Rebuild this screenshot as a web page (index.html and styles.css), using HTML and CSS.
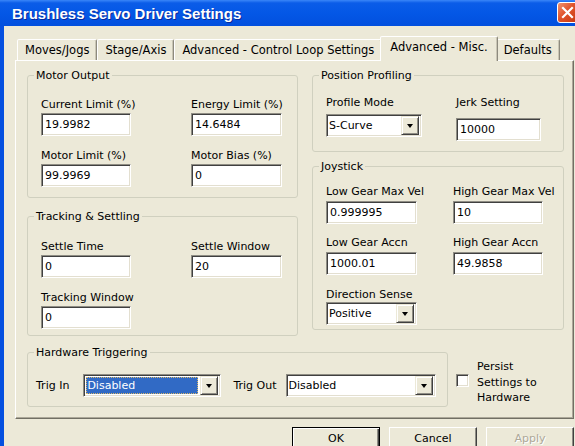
FILE: index.html
```html
<!DOCTYPE html>
<html lang="en">
<head>
<meta charset="utf-8">
<title>Brushless Servo Driver Settings</title>
<link rel="stylesheet" href="styles.css">
</head>
<body>
<div class="window">
  <div class="titlebar">
    <span class="title">Brushless Servo Driver Settings</span>
    <span class="close">
      <svg width="21" height="21" viewBox="0 0 21 21" aria-hidden="true">
        <path d="M6 6 L15 15 M15 6 L6 15" stroke="#fff" stroke-width="2.2" stroke-linecap="square" fill="none"/>
      </svg>
    </span>
  </div>

  <div class="client">
    <div class="tabs">
      <div class="tab">Moves/Jogs</div>
      <div class="tab">Stage/Axis</div>
      <div class="tab">Advanced - Control Loop Settings</div>
      <div class="tab active">Advanced - Misc.</div>
      <div class="tab">Defaults</div>
    </div>

    <div class="panel">
      <div class="columns">
        <div class="col col-left">
          <fieldset class="group motor">
            <legend>Motor Output</legend>
            <div class="fields">
              <div class="field"><span class="lbl">Current Limit (%)</span><input class="edit" type="text" value="19.9982"></div>
              <div class="field"><span class="lbl">Energy Limit (%)</span><input class="edit" type="text" value="14.6484"></div>
              <div class="field"><span class="lbl">Motor Limit (%)</span><input class="edit" type="text" value="99.9969"></div>
              <div class="field"><span class="lbl">Motor Bias (%)</span><input class="edit" type="text" value="0"></div>
            </div>
          </fieldset>

          <fieldset class="group tracking">
            <legend>Tracking &amp; Settling</legend>
            <div class="fields">
              <div class="field"><span class="lbl">Settle Time</span><input class="edit" type="text" value="0"></div>
              <div class="field"><span class="lbl">Settle Window</span><input class="edit" type="text" value="20"></div>
              <div class="field"><span class="lbl">Tracking Window</span><input class="edit" type="text" value="0"></div>
            </div>
          </fieldset>
        </div>

        <div class="col col-right">
          <fieldset class="group profiling">
            <legend>Position Profiling</legend>
            <div class="fields">
              <div class="field">
                <span class="lbl">Profile Mode</span>
                <div class="combo"><span class="combo-text">S-Curve</span><span class="combo-btn"><i class="arrow"></i></span></div>
              </div>
              <div class="field jerk"><span class="lbl">Jerk Setting</span><input class="edit" type="text" value="10000"></div>
            </div>
          </fieldset>

          <fieldset class="group joystick">
            <legend>Joystick</legend>
            <div class="fields">
              <div class="field"><span class="lbl">Low Gear Max Vel</span><input class="edit" type="text" value="0.999995"></div>
              <div class="field"><span class="lbl">High Gear Max Vel</span><input class="edit" type="text" value="10"></div>
              <div class="field"><span class="lbl">Low Gear Accn</span><input class="edit" type="text" value="1000.01"></div>
              <div class="field"><span class="lbl">High Gear Accn</span><input class="edit" type="text" value="49.9858"></div>
              <div class="field direction">
                <span class="lbl">Direction Sense</span>
                <div class="combo"><span class="combo-text">Positive</span><span class="combo-btn"><i class="arrow"></i></span></div>
              </div>
            </div>
          </fieldset>
        </div>
      </div>

      <div class="bottom-row">
        <fieldset class="group triggering">
          <legend>Hardware Triggering</legend>
          <div class="trig-row">
            <span class="trig-lbl trig-in">Trig In</span>
            <div class="combo combo-in"><span class="combo-text"><span class="selected">Disabled</span></span><span class="combo-btn"><i class="arrow"></i></span></div>
            <span class="trig-lbl trig-out">Trig Out</span>
            <div class="combo combo-out"><span class="combo-text">Disabled</span><span class="combo-btn"><i class="arrow"></i></span></div>
          </div>
        </fieldset>

        <div class="persist">
          <span class="check"></span>
          <span class="persist-text">Persist<br>Settings to<br>Hardware</span>
        </div>
      </div>
    </div>

    <div class="buttons">
      <button class="btn default" type="button">OK</button>
      <button class="btn" type="button">Cancel</button>
      <button class="btn" type="button" disabled>Apply</button>
    </div>
  </div>
</div>
</body>
</html>
```
FILE: styles.css
```css
* {
  box-sizing: border-box;
}

html,
body {
  margin: 0;
  padding: 0;
}

body {
  width: 575px;
  height: 446px;
  overflow: hidden;
  background: #ece9d8;
  font-family: "DejaVu Sans", Verdana, sans-serif;
  font-size: 11px;
  color: #000;
}

/* ---------- window chrome ---------- */

.window {
  display: flex;
  flex-direction: column;
  height: 446px;
}

.titlebar {
  position: relative;
  height: 26px;
  flex: none;
  display: flex;
  align-items: center;
  padding-left: 12px;
  background: linear-gradient(to bottom, #3a86f8 0, #0b5ce8 3px, #0457e6 50%, #0250de 100%);
}

.title {
  font-family: "Liberation Sans", Arial, sans-serif;
  font-weight: bold;
  font-size: 15px;
  color: #fff;
  text-shadow: 1px 1px 0 #0a2a9a;
  white-space: nowrap;
}

.close {
  position: absolute;
  left: 557px;
  top: 2px;
  width: 21px;
  height: 21px;
  border: 1px solid #fff;
  border-radius: 3px;
  background: linear-gradient(135deg, #f0936f 0, #e0532b 45%, #c8380f 100%);
}

.close svg {
  display: block;
  margin: -1px;
}

.client {
  flex: 1;
  border-left: 4px solid #0550e0;
  padding: 10px 0 0 11px;
}

/* ---------- tabs ---------- */

.tabs {
  position: relative;
  z-index: 1;
  display: flex;
  align-items: flex-end;
  height: 24px;
  padding-left: 2px;
}

.tab {
  height: 21px;
  padding: 0 7px;
  font-size: 11.5px;
  line-height: 20px;
  white-space: nowrap;
  border: 1px solid;
  border-bottom: none;
  border-color: #fff #8d8a7e transparent #fff;
  border-radius: 2px 2px 0 0;
  box-shadow: inset -1px 0 0 #c9c5b4;
  background: #ece9d8;
}

.tab.active {
  height: 25px;
  margin: 0 -2px -1px;
  padding: 0 9px;
  line-height: 21px;
  position: relative;
  z-index: 2;
}

/* ---------- tab page ---------- */

.panel {
  width: 559px;
  height: 359px;
  border: 1px solid;
  border-color: #fff #716f64 #716f64 #fff;
  box-shadow: inset -1px -1px 0 #aca899;
  padding: 8px 9px 0 11px;
}

.columns {
  display: grid;
  grid-template-columns: 271px 252px;
  column-gap: 14px;
  align-items: start;
}

.col {
  display: flex;
  flex-direction: column;
}

.col-left {
  gap: 12px;
}

.col-right {
  gap: 8px;
}

.group {
  margin: 0;
  min-width: 0;
  padding: 0 0 0 6px;
  border: 1px solid #d0d0bf;
  border-radius: 3px;
}

.group legend {
  padding: 0 2px;
  line-height: 13px;
  white-space: nowrap;
}

.fields {
  display: grid;
  margin-left: 7px;
  align-items: start;
}

.field {
  display: flex;
  flex-direction: column;
  align-items: flex-start;
}

.lbl {
  display: block;
  line-height: 13px;
  white-space: nowrap;
  margin-bottom: 2px;
}

/* group specific spacing */

.motor .fields {
  grid-template-columns: 90px 91px;
  column-gap: 60px;
  row-gap: 13px;
  padding: 16px 0 10px;
}

.tracking .fields {
  grid-template-columns: 90px 91px;
  column-gap: 60px;
  row-gap: 13px;
  padding: 17px 0 6px;
}

.profiling .fields {
  grid-template-columns: 96px 85px;
  column-gap: 34px;
  padding: 14px 0 10px;
}

.profiling .lbl {
  margin-bottom: 5px;
}

.profiling .jerk .edit {
  margin-top: 4px;
}

.joystick .fields {
  grid-template-columns: 91px 90px;
  column-gap: 36px;
  row-gap: 12px;
  padding: 12px 0 4px;
}

.joystick .lbl {
  margin-bottom: 3px;
}

.joystick .direction .lbl {
  margin-bottom: 1px;
}

.joystick .direction {
  margin-top: 1px;
}

.motor .edit,
.tracking .edit,
.joystick .edit {
  width: 100%;
}

.jerk .edit {
  width: 85px;
}

/* ---------- controls ---------- */

.edit {
  display: block;
  height: 23px;
  margin: 0;
  padding: 0 3px;
  font: inherit;
  color: #000;
  background: #fff;
  border: 1px solid;
  border-color: #8f8d84 #fff #fff #8f8d84;
  box-shadow: inset 1px 1px 0 #404040, inset -1px -1px 0 #e3dfd0;
  outline: none;
}

.combo {
  display: flex;
  width: 96px;
  height: 23px;
  padding: 1px 2px 1px 2px;
  background: #fff;
  border: 1px solid;
  border-color: #8f8d84 #fff #fff #8f8d84;
  box-shadow: inset 1px 1px 0 #404040, inset -1px -1px 0 #e3dfd0;
}

.direction .combo {
  width: 91px;
}

.combo-text {
  flex: 1;
  min-width: 0;
  line-height: 19px;
  padding-left: 0;
  white-space: nowrap;
  overflow: hidden;
}

.combo-btn {
  flex: none;
  width: 18px;
  height: 19px;
  display: flex;
  align-items: center;
  justify-content: center;
  background: #ece9d8;
  border: 1px solid;
  border-color: #ece9d8 #404040 #404040 #ece9d8;
  box-shadow: inset 1px 1px 0 #fff, inset -1px -1px 0 #8f8d84;
}

.arrow {
  display: block;
  width: 0;
  height: 0;
  border-left: 3.5px solid transparent;
  border-right: 3.5px solid transparent;
  border-top: 4px solid #000;
}

/* ---------- hardware triggering row ---------- */

.bottom-row {
  display: flex;
  align-items: flex-start;
  margin-top: 10px;
}

.triggering {
  width: 421px;
}

.trig-row {
  display: flex;
  align-items: center;
  margin-left: 2px;
  padding: 15px 0 9px;
}

.trig-lbl {
  white-space: nowrap;
}

.trig-in {
  margin-right: 14px;
}

.trig-out {
  margin: 0 9px 0 12px;
}

.combo-in {
  width: 138px;
}

.combo-out {
  width: 150px;
}

.combo-text .selected {
  display: block;
  height: 17px;
  margin: 1px 2px 0 0;
  padding-left: 1px;
  line-height: 17px;
  color: #fff;
  background: #316ac5;
  outline: 1px dotted #d9b86a;
  outline-offset: -1px;
}

.persist {
  display: flex;
  align-items: flex-start;
  margin: 13px 0 0 8px;
}

.check {
  flex: none;
  width: 13px;
  height: 13px;
  margin-top: 15px;
  margin-right: 8px;
  background: #fff;
  border: 1px solid;
  border-color: #8f8d84 #fff #fff #8f8d84;
  box-shadow: inset 1px 1px 0 #404040, inset -1px -1px 0 #e3dfd0;
}

.persist-text {
  line-height: 15.5px;
  white-space: nowrap;
}

/* ---------- dialog buttons ---------- */

.buttons {
  width: 559px;
  display: flex;
  justify-content: flex-end;
  gap: 9px;
  margin-top: 8px;
}

.btn {
  width: 88px;
  height: 23px;
  margin: 0;
  padding: 0;
  font: inherit;
  color: #000;
  background: #ece9d8;
  border: 1px solid;
  border-color: #fff #404040 #404040 #fff;
  box-shadow: inset -1px -1px 0 #8f8d84;
}

.btn.default {
  border: 1px solid #000;
  box-shadow: inset 1px 1px 0 #fff, inset -1px -1px 0 #404040, inset -2px -2px 0 #8f8d84;
}

.btn:disabled {
  color: #aca899;
  text-shadow: 1px 1px 0 #fff;
}
```
